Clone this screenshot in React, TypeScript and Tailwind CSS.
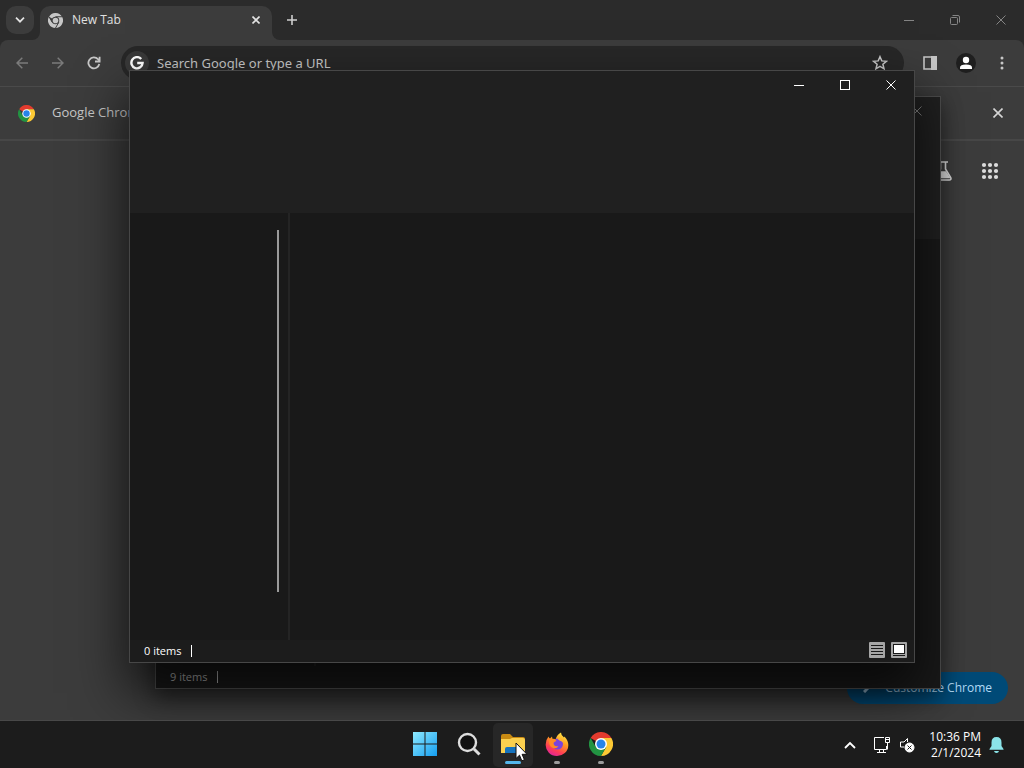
import type { ReactNode } from "react"

function IconButton({ label, className = "", children }: { label: string; className?: string; children: ReactNode }) {
  return (
    <button type="button" aria-label={label} className={`flex shrink-0 items-center justify-center ${className}`}>
      {children}
    </button>
  )
}

function ChromeIcon({ size, mono = false }: { size: number; mono?: boolean }) {
  return (
    <svg width={size} height={size} viewBox="0 0 48 48">
      <path d="M24 24 3.2 12A24 24 0 0 1 44.8 12H24Z" fill={mono ? "#c7c7c7" : "#e33b2e"} />
      <path d="M24 12H44.8A24 24 0 0 1 24 48L34.4 30Z" fill={mono ? "#c7c7c7" : "#fcc934"} />
      <path d="M3.2 12A24 24 0 0 0 24 48L34.4 30 24 24 13.6 30Z" fill={mono ? "#c7c7c7" : "#229342"} />
      {mono && <path d="M24 12H45M34.4 30 24 48M13.6 30 3.2 12" stroke="#3c3c3c" strokeWidth="3" fill="none" />}
      <circle cx="24" cy="24" r="12" fill={mono ? "#3c3c3c" : "#fff"} />
      <circle cx="24" cy="24" r="9" fill={mono ? "#c7c7c7" : "#2684ea"} />
    </svg>
  )
}

function CloseIcon({ size, width = 1 }: { size: number; width?: number }) {
  return (
    <svg width={size} height={size} viewBox={`0 0 ${size} ${size}`} fill="none" stroke="currentColor" strokeWidth={width}>
      <path d={`M.5.5 ${size - 0.5} ${size - 0.5}M${size - 0.5}.5.5 ${size - 0.5}`} />
    </svg>
  )
}

function MinimizeIcon() {
  return (
    <svg width="10" height="10" stroke="currentColor">
      <path d="M0 5.5h10" />
    </svg>
  )
}

function TabStrip() {
  return (
    <div className="flex h-10 shrink-0 items-end bg-[#2b2b2b]">
      <IconButton label="Search tabs" className="mb-1.5 ml-1.5 size-7 rounded-[10px] bg-[#3c3c3c] text-[#e3e3e3]">
        <svg width="10" height="6" fill="none" stroke="currentColor" strokeWidth="1.7">
          <path d="m1 .7 4 4 4-4" />
        </svg>
      </IconButton>
      <div className="ml-[-2px] size-2 bg-[#3c3c3c]">
        <div className="size-2 rounded-br-lg bg-[#2b2b2b]" />
      </div>
      <div className="flex h-[34px] w-[232px] items-center rounded-t-[10px] bg-[#3c3c3c] pb-1.5 pl-2 pr-2">
        <ChromeIcon size={15} mono />
        <span className="ml-[9px] flex-1 text-xs text-[#e0e0e0]">New Tab</span>
        <IconButton label="Close tab" className="size-4 text-[#e3e3e3]">
          <CloseIcon size={8} width={1.6} />
        </IconButton>
      </div>
      <div className="size-2 bg-[#3c3c3c]">
        <div className="size-2 rounded-bl-lg bg-[#2b2b2b]" />
      </div>
      <IconButton label="New tab" className="mb-1.5 h-7 w-6 text-[#cfcfcf]">
        <svg width="10" height="10" stroke="currentColor" strokeWidth="1.6">
          <path d="M5 0v10M0 5h10" />
        </svg>
      </IconButton>
      <div className="ml-auto flex self-stretch text-[#858585]">
        <IconButton label="Minimize" className="w-[46px]">
          <MinimizeIcon />
        </IconButton>
        <IconButton label="Restore" className="w-[46px]">
          <svg width="10" height="10" fill="none" stroke="currentColor">
            <rect x=".5" y="2.5" width="7" height="7" rx="1" />
            <path d="M2.5.5H8q1.500 0 1.500 1.500v5.500" />
          </svg>
        </IconButton>
        <IconButton label="Close" className="w-[46px]">
          <CloseIcon size={10} />
        </IconButton>
      </div>
    </div>
  )
}

function Toolbar() {
  return (
    <div className="bg-[#2b2b2b]">
      <div className="flex h-[46px] items-center rounded-t-lg bg-[#3c3c3c] pl-1">
        <IconButton label="Back" className="size-9 text-[#7b7b7b]">
          <svg width="12" height="12" fill="none" stroke="currentColor" strokeWidth="1.500">
            <path d="M12 6H1M6.300.7 1 6l5.300 5.300" />
          </svg>
        </IconButton>
        <IconButton label="Forward" className="size-9 text-[#7b7b7b]">
          <svg width="12" height="12" fill="none" stroke="currentColor" strokeWidth="1.500">
            <path d="M0 6h11M5.700.7 11 6l-5.300 5.300" />
          </svg>
        </IconButton>
        <IconButton label="Reload" className="size-9 text-[#c7c7c7]">
          <svg width="14" height="14" viewBox="0 0 14 14" fill="none" stroke="currentColor" strokeWidth="1.800">
            <path d="M12.300 8A5.500 5.500 0 1 1 11 3.200L12.500 5" />
            <path d="M12.600.8v4.700H8" />
          </svg>
        </IconButton>
        <div className="ml-[9px] mr-2 flex h-[34px] flex-1 items-center rounded-full bg-[#272727] pl-1 pr-1.5">
          <span className="flex size-6 items-center justify-center rounded-full bg-[#393939]">
            <svg width="14" height="14" viewBox="0 0 14 14" fill="none" stroke="#fff" strokeWidth="2.400">
              <path d="M11.200 3A5.600 5.600 0 1 0 12.600 7H7.200" />
            </svg>
          </span>
          <input
            aria-label="Address and search bar"
            placeholder="Search Google or type a URL"
            className="ml-2 h-6 min-w-0 flex-1 bg-transparent font-['Noto_Sans',sans-serif] text-[13px] outline-none placeholder:text-[#c7c7c7]"
          />
          <IconButton label="Bookmark this tab" className="size-9 text-[#c7c7c7]">
            <svg width="16" height="16" viewBox="0 0 16 16" fill="none" stroke="currentColor" strokeWidth="1.500">
              <path d="m8 1.700 1.800 4.200 4.600.4-3.500 3 1.100 4.500L8 11.400l-4 2.400 1.100-4.500-3.500-3 4.600-.4Z" />
            </svg>
          </IconButton>
        </div>
        <IconButton label="Side panel" className="size-9 text-[#c7c7c7]">
          <svg width="14" height="14">
            <path d="M1 1h12v12H1Z" fill="none" stroke="currentColor" strokeWidth="1.600" />
            <path d="M8 0h6v14H8Z" fill="currentColor" />
          </svg>
        </IconButton>
        <IconButton label="Profile" className="size-9">
          <svg width="20" height="20">
            <circle cx="10" cy="10" r="10" fill="#1f1f1f" />
            <circle cx="10" cy="7" r="3.200" fill="#fff" />
            <path d="M4 16v-1.500q0-3 6-3t6 3V16Z" fill="#fff" />
          </svg>
        </IconButton>
        <IconButton label="Menu" className="mr-1 size-9 text-[#c7c7c7]">
          <svg width="4" height="14" fill="currentColor">
            <circle cx="2" cy="2" r="1.500" />
            <circle cx="2" cy="7" r="1.500" />
            <circle cx="2" cy="12" r="1.500" />
          </svg>
        </IconButton>
      </div>
    </div>
  )
}

function Browser() {
  return (
    <main className="flex min-h-0 flex-1 flex-col">
      <TabStrip />
      <Toolbar />
      <div className="flex h-[53px] shrink-0 items-center border-t border-[#4a4a4a] bg-[#3c3c3c] pl-[18px] pr-[18px]">
        <ChromeIcon size={17} />
        <span className="ml-[17px] flex-1 text-[13px] text-[#c7c7c7]">Google Chrome</span>
        <IconButton label="Dismiss" className="size-4 text-[#d6d6d6]">
          <CloseIcon size={10} width={1.6} />
        </IconButton>
      </div>
      <div className="flex min-h-0 flex-1 flex-col items-end justify-between border-t-2 border-[#474747] bg-[#3c3c3c] px-4 pb-4 pt-5">
        <div className="flex items-center gap-7 pr-[9px] text-[#dcdcdc]">
          <IconButton label="Search Labs">
            <svg width="20" height="20" fill="none" stroke="currentColor" strokeWidth="1.600">
              <path d="M5 1h10M7.500 1v7L2.300 16.500q-1 2.500 1.500 2.500h12.400q2.500 0 1.500-2.500L12.500 8V1" />
              <path d="M4 16.500 7.500 11h5l3.500 5.500Z" fill="currentColor" />
            </svg>
          </IconButton>
          <IconButton label="Google apps">
            <svg width="18" height="18" fill="currentColor">
              {[3, 9, 15].map((y) => [3, 9, 15].map((x) => <circle key={`${x}-${y}`} cx={x} cy={y} r="2.100" />))}
            </svg>
          </IconButton>
        </div>
        <button type="button" className="flex h-8 items-center gap-3 rounded-full bg-[#004a77] px-4 text-xs text-[#b4dcf8]">
          <svg width="10" height="10" fill="none" stroke="currentColor" strokeWidth="3">
            <path d="m1 9 8-8" />
          </svg>
          Customize Chrome
        </button>
      </div>
    </main>
  )
}

function ExplorerWindow({ items, active = false, className }: { items: number; active?: boolean; className: string }) {
  return (
    <section
      className={`absolute flex h-[593px] w-[786px] flex-col border ${className} ${
        active ? "border-[#474747] bg-[#191919] text-white" : "border-[#4c4c4c] bg-[#191919] text-[#b0b0b0]"
      }`}
    >
      <header className={`flex h-[142px] shrink-0 items-start justify-end ${active ? "bg-[#202020]" : "bg-[#202020] text-[#7c7c7c]"}`}>
        <IconButton label="Minimize" className="h-7 w-[46px]">
          <MinimizeIcon />
        </IconButton>
        <IconButton label="Maximize" className="h-7 w-[46px]">
          <svg width="10" height="10" fill="none" stroke="currentColor">
            <rect x=".5" y=".5" width="9" height="9" />
          </svg>
        </IconButton>
        <IconButton label="Close" className="h-7 w-[46px]">
          <CloseIcon size={10} />
        </IconButton>
      </header>
      <div className="flex min-h-0 flex-1">
        <nav className="flex w-40 justify-end border-r-2 border-[#242424] pb-12 pr-[9px] pt-[17px]">
          <div className={`w-0.5 ${active ? "bg-[#9a9a9a]" : ""}`} />
        </nav>
      </div>
      <footer className={`flex h-[22px] shrink-0 items-center pl-3.5 pr-[7px] text-[11px] ${active ? "bg-[#1c1c1c]" : "bg-[#191919]"}`}>
        <span>{items} items</span>
        <span className="ml-2.5 h-3 w-px bg-current" />
        {active && (
          <div className="mb-0.5 ml-auto flex gap-1.5">
            <IconButton label="Details view">
              <svg width="16" height="16">
                <rect width="16" height="16" rx="1" fill="#a6a6a6" />
                <path d="M2 3.500h12M2 6.500h12M2 9.500h12M2 12.500h12" stroke="#191919" />
              </svg>
            </IconButton>
            <IconButton label="Large icons view">
              <svg width="16" height="16">
                <rect width="16" height="16" rx="1" fill="#a6a6a6" />
                <rect x="2.500" y="2.500" width="11" height="9" fill="#fff" stroke="#191919" />
                <path d="M2 13.500h12" stroke="#191919" />
              </svg>
            </IconButton>
          </div>
        )}
      </footer>
    </section>
  )
}

function FirefoxIcon() {
  return (
    <svg width="24" height="24" viewBox="0 0 24 24">
      <defs>
        <linearGradient id="fox" x1="0.800" y1="0" x2="0.300" y2="1">
          <stop offset="0" stopColor="#fff04b" />
          <stop offset=".4" stopColor="#ff9a1f" />
          <stop offset=".75" stopColor="#ff3d55" />
          <stop offset="1" stopColor="#e0249a" />
        </linearGradient>
      </defs>
      <path d="M3.500 4.500q.5 1.500 1.500 2L7 4.500l.5 2.500 3 .5Q12 2.500 16 .5q0 3 3 5l.5-1Q23.500 9 23.300 13.500A11.300 10.700 0 0 1 .7 13Q.5 8 3.500 4.500Z" fill="url(#fox)" />
      <circle cx="12.500" cy="12" r="5.500" fill="#7a43dc" />
      <path d="M4 8q3-2 6-1l1.500 2q-2 .5-3 2 .5 4 5 3-1.500 3-5.500 2Q3.500 14.500 4 8Z" fill="#ff8a24" />
      <path d="M12 6.500q5-1 6.500 4.500-1.500-2-4-2.500Z" fill="#ffb52d" />
    </svg>
  )
}

function TaskButton({ label, marker = "", className = "", children }: { label: string; marker?: string; className?: string; children: ReactNode }) {
  return (
    <button type="button" aria-label={label} className={`flex h-11 w-10 flex-col items-center justify-end rounded-[5px] ${className}`}>
      <span className="flex h-8 items-center">{children}</span>
      <span className={`mb-[3px] mt-px h-[3px] rounded-full ${marker}`} />
    </button>
  )
}

function Taskbar() {
  return (
    <footer className="grid h-12 shrink-0 grid-cols-[1fr_auto_1fr] items-center border-t border-[#484848] bg-[#1c1c1c]">
      <div />
      <div className="flex gap-1 pl-0.5">
        <TaskButton label="Start">
          <svg width="24" height="24">
            <defs>
              <linearGradient id="win" x1="0" y1="0" x2="24" y2="24" gradientUnits="userSpaceOnUse">
                <stop offset="0" stopColor="#8eeaff" />
                <stop offset="1" stopColor="#149df0" />
              </linearGradient>
            </defs>
            <path d="M0 0h11.500v11.500H0ZM12.500 0H24v11.500H12.500ZM0 12.500h11.500V24H0ZM12.500 12.500H24V24H12.500Z" fill="url(#win)" />
          </svg>
        </TaskButton>
        <TaskButton label="Search">
          <svg width="24" height="24" fill="none" stroke="#dedede">
            <circle cx="10.500" cy="10.500" r="8.500" fill="#111" strokeWidth="2.400" />
            <path d="m17 17 5.500 5.500" strokeWidth="3" />
          </svg>
        </TaskButton>
        <TaskButton label="File Explorer" marker="w-4 bg-[#55b7ec]" className="bg-[#272727]">
          <svg width="26" height="24">
            <path d="M1 4q0-2 2-2h7l3 3h10q2 0 2 2v3H1Z" fill="#c88a12" />
            <path d="M1 7h9l2-1h11q2 0 2 2v13H1Z" fill="#fbd04f" />
            <path d="M5 21v-4q0-2 2-2h12q2 0 2 2v4Z" fill="#1673bd" />
          </svg>
        </TaskButton>
        <TaskButton label="Firefox" marker="w-1.5 bg-[#9c9c9c]">
          <FirefoxIcon />
        </TaskButton>
        <TaskButton label="Google Chrome" marker="w-1.5 bg-[#9c9c9c]">
          <ChromeIcon size={24} />
        </TaskButton>
      </div>
      <div className="flex items-center justify-end pr-5 text-white">
        <IconButton label="Show hidden icons" className="mr-[18px]">
          <svg width="12" height="8" fill="none" stroke="currentColor" strokeWidth="1.800">
            <path d="m1 7 5-5 5 5" />
          </svg>
        </IconButton>
        <IconButton label="Network" className="mr-2.5">
          <svg width="16" height="16" fill="none" stroke="currentColor">
            <path d="M10 .5H.5v12h12V9M3 15.500h9M5.500 12.500v3M9.500 12.500v3" />
            <path d="M11.500.5h4v5h-4ZM13.500 5.500v7M12 2.500h3" />
          </svg>
        </IconButton>
        <IconButton label="Volume muted" className="mr-3.5">
          <svg width="15" height="16" fill="none" stroke="currentColor">
            <path d="M7.500 5V1.500L4 5H.5v5H4" />
            <circle cx="9.500" cy="10.500" r="4.500" fill="#fff" />
            <path d="m7.500 8.500 4 4M11.500 8.500l-4 4" stroke="#1c1c1c" />
          </svg>
        </IconButton>
        <time className="text-right text-xs leading-4">
          10:36 PM
          <br />
          2/1/2024
        </time>
        <IconButton label="Notifications" className="ml-2">
          <svg width="15" height="16" fill="#8be4e9">
            <path d="M7.500 0q5 0 5 5.500V9l2 3v.8H.5V12l2-3V5.500q0-5.500 5-5.500ZM5 14h5q-.5 2-2.500 2T5 14Z" />
          </svg>
        </IconButton>
      </div>
    </footer>
  )
}

export default function App() {
  return (
    <div className="relative flex h-screen flex-col overflow-hidden bg-[#3c3c3c] font-['Open_Sans',sans-serif]">
      <Browser />
      <ExplorerWindow items={9} className="left-[155px] top-24 shadow-[0_8px_20px_rgba(0,0,0,0.45)]" />
      <ExplorerWindow items={0} active className="left-[129px] top-[70px] shadow-[0_26px_48px_4px_rgba(0,0,0,0.65)]" />
      <div className="relative flex flex-col">
        <Taskbar />
      </div>
      {/* mouse pointer */}
      <svg className="pointer-events-none absolute left-[515px] top-[742px]" width="13" height="20">
        <path d="M1 1v15.500l3.500-3.300 2.300 5.600 2.600-1.100-2.300-5.400H12Z" fill="#fff" stroke="#111" />
      </svg>
    </div>
  )
}
